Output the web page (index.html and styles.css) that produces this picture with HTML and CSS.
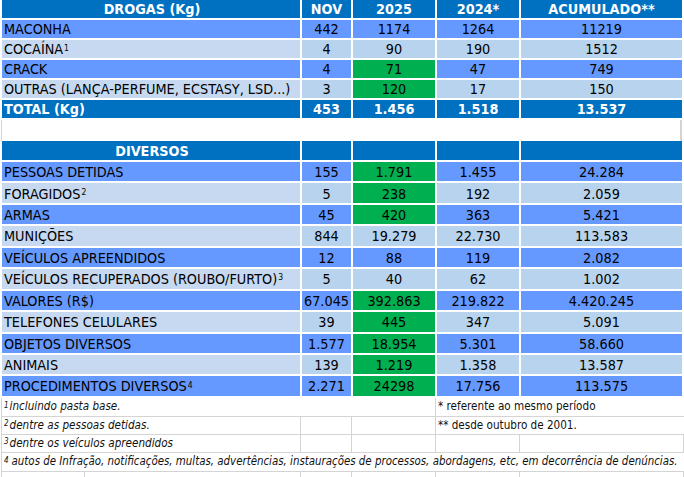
FILE: index.html
```html
<!DOCTYPE html>
<html lang="pt">
<head>
<meta charset="utf-8">
<link rel="stylesheet" href="styles.css">
</head>
<body>
<div class="sheet">
  <div class="row r20 dark">
    <div class="c lbl ctr bold">DROGAS (Kg)</div><div class="c bold">NOV</div><div class="c bold">2025</div><div class="c bold">2024*</div><div class="c bold">ACUMULADO**</div>
  </div>
  <div class="row r20 bright">
    <div class="c lbl">MACONHA</div><div class="c">442</div><div class="c">1174</div><div class="c">1264</div><div class="c">11219</div>
  </div>
  <div class="row r20 light">
    <div class="c lbl">COCAÍNA<sup>1</sup></div><div class="c">4</div><div class="c">90</div><div class="c">190</div><div class="c">1512</div>
  </div>
  <div class="row r20 bright">
    <div class="c lbl">CRACK</div><div class="c">4</div><div class="c green">71</div><div class="c">47</div><div class="c">749</div>
  </div>
  <div class="row r20 light">
    <div class="c lbl">OUTRAS (LANÇA-PERFUME, ECSTASY, LSD...)</div><div class="c">3</div><div class="c green">120</div><div class="c">17</div><div class="c">150</div>
  </div>
  <div class="row r20 dark">
    <div class="c lbl bold">TOTAL (Kg)</div><div class="c bold">453</div><div class="c bold">1.456</div><div class="c bold">1.518</div><div class="c bold">13.537</div>
  </div>
  <div class="row blank">
    <div class="c"></div>
  </div>
  <div class="row r21 dark">
    <div class="c lbl ctr bold">DIVERSOS</div><div class="c"></div><div class="c"></div><div class="c"></div><div class="c"></div>
  </div>
  <div class="row rd bright">
    <div class="c lbl">PESSOAS DETIDAS</div><div class="c">155</div><div class="c green">1.791</div><div class="c">1.455</div><div class="c">24.284</div>
  </div>
  <div class="row rd light">
    <div class="c lbl">FORAGIDOS<sup>2</sup></div><div class="c">5</div><div class="c green">238</div><div class="c">192</div><div class="c">2.059</div>
  </div>
  <div class="row rd bright">
    <div class="c lbl">ARMAS</div><div class="c">45</div><div class="c green">420</div><div class="c">363</div><div class="c">5.421</div>
  </div>
  <div class="row rd light">
    <div class="c lbl">MUNIÇÕES</div><div class="c">844</div><div class="c">19.279</div><div class="c">22.730</div><div class="c">113.583</div>
  </div>
  <div class="row rd bright">
    <div class="c lbl">VEÍCULOS APREENDIDOS</div><div class="c">12</div><div class="c">88</div><div class="c">119</div><div class="c">2.082</div>
  </div>
  <div class="row rd light">
    <div class="c lbl">VEÍCULOS RECUPERADOS (ROUBO/FURTO)<sup>3</sup></div><div class="c">5</div><div class="c">40</div><div class="c">62</div><div class="c">1.002</div>
  </div>
  <div class="row rd bright">
    <div class="c lbl">VALORES (R$)</div><div class="c">67.045</div><div class="c green">392.863</div><div class="c">219.822</div><div class="c">4.420.245</div>
  </div>
  <div class="row rd light">
    <div class="c lbl">TELEFONES CELULARES</div><div class="c">39</div><div class="c green">445</div><div class="c">347</div><div class="c">5.091</div>
  </div>
  <div class="row rd bright">
    <div class="c lbl">OBJETOS DIVERSOS</div><div class="c">1.577</div><div class="c green">18.954</div><div class="c">5.301</div><div class="c">58.660</div>
  </div>
  <div class="row rd light">
    <div class="c lbl">ANIMAIS</div><div class="c">139</div><div class="c green">1.219</div><div class="c">1.358</div><div class="c">13.587</div>
  </div>
  <div class="row rd bright">
    <div class="c lbl">PROCEDIMENTOS DIVERSOS<sup>4</sup></div><div class="c">2.271</div><div class="c green">24298</div><div class="c">17.756</div><div class="c">113.575</div>
  </div>

  <div class="row note n1">
    <div class="c note-it"><sup>1</sup>incluindo pasta base.</div><div class="c note-rm">* referente ao mesmo período</div>
  </div>
  <div class="row note n2">
    <div class="c note-it"><sup>2</sup>dentre as pessoas detidas.</div><div class="c"></div><div class="c"></div><div class="c note-rm">** desde outubro de 2001.</div>
  </div>
  <div class="row note n3">
    <div class="c note-it"><sup>3</sup>dentre os veículos apreendidos</div><div class="c"></div><div class="c"></div><div class="c"></div><div class="c"></div>
  </div>
  <div class="row note n4">
    <div class="c note-it"><sup>4</sup> autos de Infração, notificações, multas, advertências, instaurações de processos, abordagens, etc, em decorrência de denúncias.</div>
  </div>
  <div class="row note n5">
    <div class="c"></div><div class="c"></div><div class="c"></div><div class="c"></div><div class="c"></div><div class="c"></div>
  </div>
</div>
</body>
</html>
```

FILE: styles.css
```css
* { box-sizing: border-box; }

html, body {
  margin: 0;
  padding: 0;
  background: #ffffff;
}

body {
  font-family: "DejaVu Sans Condensed", "DejaVu Sans", sans-serif;
  font-stretch: condensed;
  font-size: 14.3px;
  color: #000000;
  width: 684px;
  height: 477px;
  overflow: hidden;
}

.sheet {
  display: flex;
  flex-direction: column;
}

.row {
  display: grid;
  grid-template-columns: 302px 51px 84px 84px 163px;
}

.r20 { height: 20px; }
.r21 { height: 21px; }
.rd { height: 21.45px; }

.c {
  display: flex;
  align-items: center;
  justify-content: center;
  white-space: nowrap;
  overflow: visible;
  border-right: 2px solid #ffffff;
  border-bottom: 2px solid #ffffff;
  line-height: 1;
  padding-top: 1px;
}

.c:first-child { border-left: 2px solid #ffffff; }

.lbl {
  justify-content: flex-start;
  padding-left: 2px;
}

.lbl.ctr { justify-content: center; }

.bold { font-weight: bold; }

.dark .c { background: #0070c0; color: #ffffff; }
.bright .c { background: #6699ff; }
.light .c { background: #b8d3ee; }
.light .c.lbl { background: #c6d9f0; }
.c.green { background: #00b050; }

sup {
  font-size: 8.5px;
  line-height: 0;
  position: relative;
  top: -2px;
  vertical-align: top;
  margin-left: 1px;
}

.blank {
  height: 21px;
  grid-template-columns: 682px;
}
.blank .c {
  border-left: 1px solid #d4d4d4;
  border-right: 2px solid #d4d4d4;
  border-bottom: none;
  margin-left: 1px;
}

.note .c {
  border-left: none;
  border-right: 1px solid #d4d4d4;
  border-bottom: 1px solid #d4d4d4;
  font-size: 11.6px;
  justify-content: flex-start;
  padding-left: 2px;
  padding-top: 0;
  color: #111111;
}
.note .c:first-child {
  border-left: 1px solid #d4d4d4;
  margin-left: 1px;
}

.note-it { font-style: italic; }
.note-it sup { font-size: 8px; margin-left: 0; margin-right: 1px; top: -1px; }

.n1 { height: 19px; grid-template-columns: 436px 248px; }
.n2 { height: 18px; grid-template-columns: 301px 51px 84px 248px; }
.n3 { height: 18px; grid-template-columns: 301px 51px 84px 84px 164px; }
.n4 { height: 19px; grid-template-columns: 684px; }
.n4 .c { padding-left: 2px; font-size: 11.4px; }
.n4 .c sup { margin-right: 3px; }
.n5 { height: 10px; grid-template-columns: 85px 216px 51px 84px 84px 164px; }
.n1 .c:last-child, .n2 .c:last-child, .n4 .c:last-child { border-right: none; }
```
